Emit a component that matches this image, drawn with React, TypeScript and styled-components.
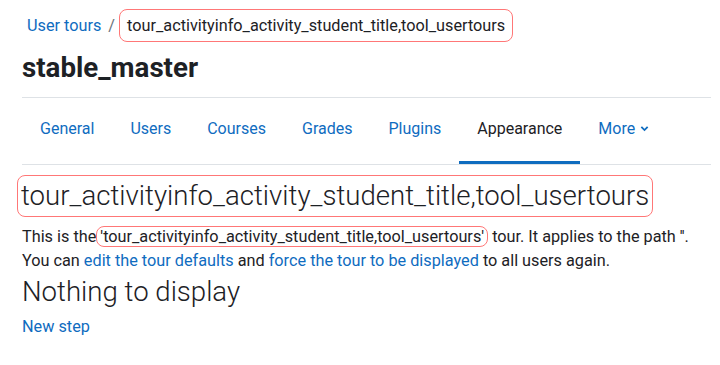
import React from 'react';
import styled, { createGlobalStyle } from 'styled-components';

const GlobalStyle = createGlobalStyle`
  body {
    margin: 0;
    background: #fff;
    font-family: Roboto, "Liberation Sans", sans-serif;
    color: #1d2125;
    font-size: 16.25px;
    line-height: 23px;
  }
`;

const Page = styled.div`
  padding: 0 9px 0 22px;
`;

const Marked = styled.span<{ $pad?: string; $block?: boolean }>`
  display: ${(p) => (p.$block ? 'inline-block' : 'inline')};
  border: 1.5px solid #f77;
  border-radius: 8px;
  padding: ${(p) => p.$pad || '0 2px'};
`;

const Breadcrumb = styled.ol`
  display: flex;
  align-items: center;
  list-style: none;
  margin: 0;
  padding: 9px 0 0 5px;
  height: 33px;
  & > li + li::before {
    content: '/';
    color: #6a737b;
    padding: 0 4px 0 7px;
  }
`;

const Crumb = styled.li`
  display: flex;
  align-items: center;
`;

const Link = styled.a`
  color: #0f6cbf;
  text-decoration: none;
`;

const SiteTitle = styled.h1`
  margin: 9px 0 0;
  font-size: 27.7px;
  font-weight: 700;
  line-height: 33px;
  height: 47px;
  border-bottom: 1px solid #dee2e6;
  box-sizing: border-box;
`;

const Tabs = styled.nav`
  display: flex;
  height: 67px;
  border-bottom: 1px solid #dee2e6;
  box-sizing: border-box;
`;

const Tab = styled.a<{ $active?: boolean }>`
  display: flex;
  align-items: center;
  gap: 5px;
  padding: 0 18px 3px;
  font-size: 16px;
  color: ${(p) => (p.$active ? '#1d2125' : '#0f6cbf')};
  border-bottom: 3px solid ${(p) => (p.$active ? '#0f6cbf' : 'transparent')};
  text-decoration: none;
`;

const Heading = styled.h2`
  margin: 10px 0 0 -5px;
  font-size: 27.6px;
  font-weight: 300;
  line-height: 34px;
`;

const Para = styled.p`
  margin: 8px 0 0;
  line-height: 23.5px;
`;

const SubHeading = styled.h3`
  margin: 3px 0 0;
  font-size: 27.6px;
  font-weight: 300;
  line-height: 33px;
`;

const NewStep = styled.div`
  margin-top: 7px;
`;

const Chevron = () => (
  <svg width="9" height="9" viewBox="0 0 10 10">
    <path d="M1.5 3.2 L5 6.7 L8.5 3.2" fill="none" stroke="#0f6cbf" strokeWidth="2" />
  </svg>
);

const tabs = ['General', 'Users', 'Courses', 'Grades', 'Plugins', 'Appearance'];
const tourName = 'tour_activityinfo_activity_student_title,tool_usertours';

export default function App() {
  return (
    <>
      <GlobalStyle />
      <Page>
        <Breadcrumb>
          <Crumb>
            <Link href="#">User tours</Link>
          </Crumb>
          <Crumb>
            <Marked $pad="4px 7px">{tourName}</Marked>
          </Crumb>
        </Breadcrumb>
        <SiteTitle>stable_master</SiteTitle>
        <Tabs>
          {tabs.map((t) => (
            <Tab key={t} href="#" $active={t === 'Appearance'}>
              {t}
            </Tab>
          ))}
          <Tab href="#">
            More <Chevron />
          </Tab>
        </Tabs>
        <Heading>
          <Marked $block $pad="3px 3px">{tourName}</Marked>
        </Heading>
        <Para>
          This is the<Marked $pad="0 3px">'{tourName}'</Marked> tour. It applies to the path ''.
          <br />
          You can <Link href="#">edit the tour defaults</Link> and{' '}
          <Link href="#">force the tour to be displayed</Link> to all users again.
        </Para>
        <SubHeading>Nothing to display</SubHeading>
        <NewStep>
          <Link href="#">New step</Link>
        </NewStep>
      </Page>
    </>
  );
}
